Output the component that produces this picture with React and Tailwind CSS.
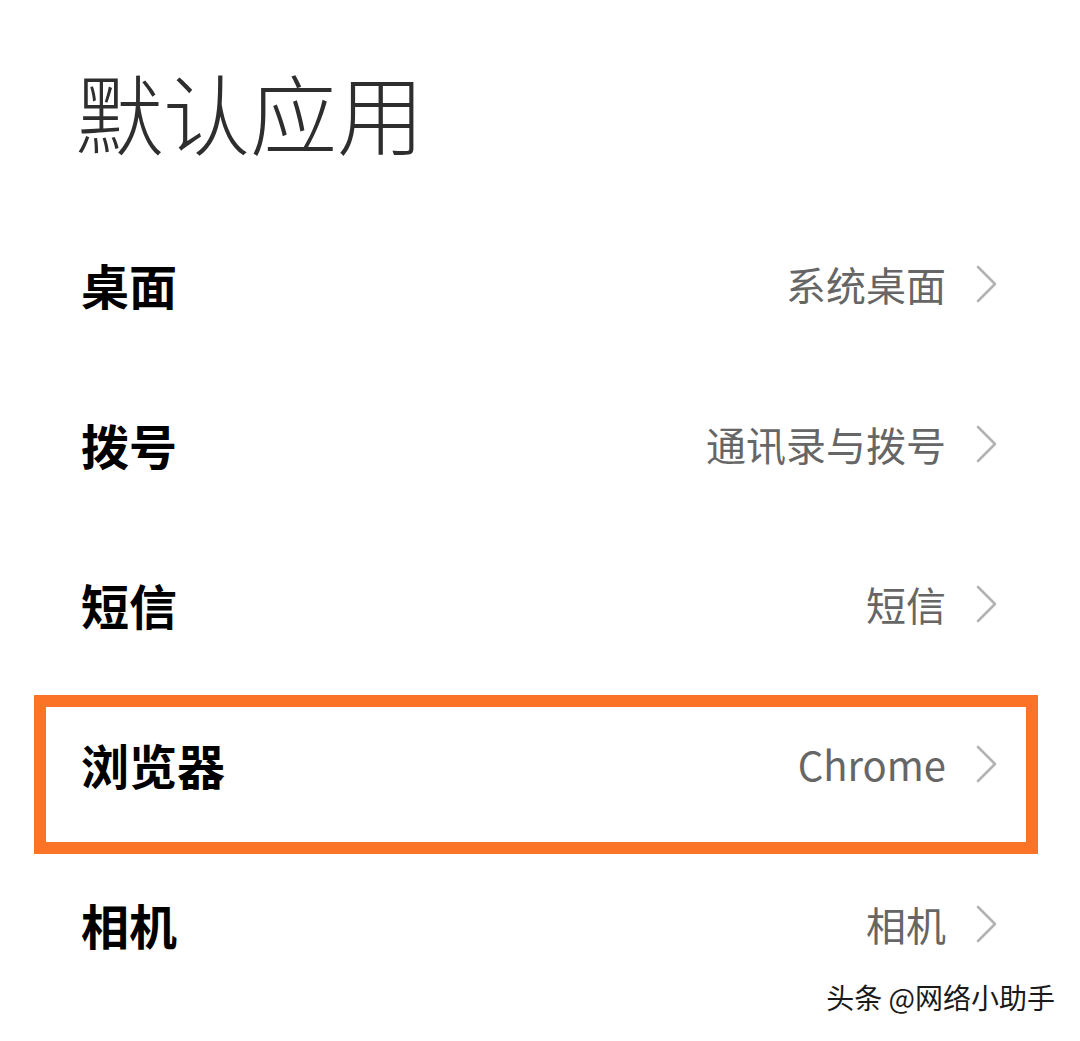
import React from "react";

const rows = [
  { label: "桌面", value: "系统桌面" },
  { label: "拨号", value: "通讯录与拨号" },
  { label: "短信", value: "短信" },
  { label: "浏览器", value: "Chrome", highlight: true },
  { label: "相机", value: "相机" },
];

function Chevron() {
  return (
    <svg width="22" height="38" viewBox="0 0 22 38" fill="none">
      <path d="M2 2 L19 19 L2 36" stroke="#b3b3b3" strokeWidth="2.6" strokeLinecap="round" strokeLinejoin="round" />
    </svg>
  );
}

export default function App() {
  return (
    <div className="relative w-[1080px] h-[1041px] overflow-hidden bg-white font-['Noto_Sans_CJK_SC','Noto_Sans',sans-serif]">
      <h1 className="pl-[76px] pt-[66px] h-[162px] text-[87px] leading-[90px] font-light text-[#2e2e2e]">
        默认应用
      </h1>
      <div className="mt-[42px] flex flex-col">
        {rows.map((r) => (
          <div key={r.label} className="relative flex h-[160px] items-center justify-between pl-[81px] pr-[82px]">
            <span className="text-[48px] font-bold leading-none text-black">{r.label}</span>
            <div className="flex items-center gap-[30px]">
              <span className="text-[40px] leading-none text-[#666666]">{r.value}</span>
              <Chevron />
            </div>
            {r.highlight && (
              <div className="pointer-events-none absolute left-[34px] top-[11px] h-[159px] w-[1004px] border-[12px] border-[#fb7326]" />
            )}
          </div>
        ))}
      </div>
      <div className="absolute right-[25px] top-[983px] text-[28px] leading-none text-[#1a1a1a] [text-shadow:1px_1px_1px_#ffffff,-1px_-1px_0_#ffffff]">
        头条 @网络小助手
      </div>
    </div>
  );
}
